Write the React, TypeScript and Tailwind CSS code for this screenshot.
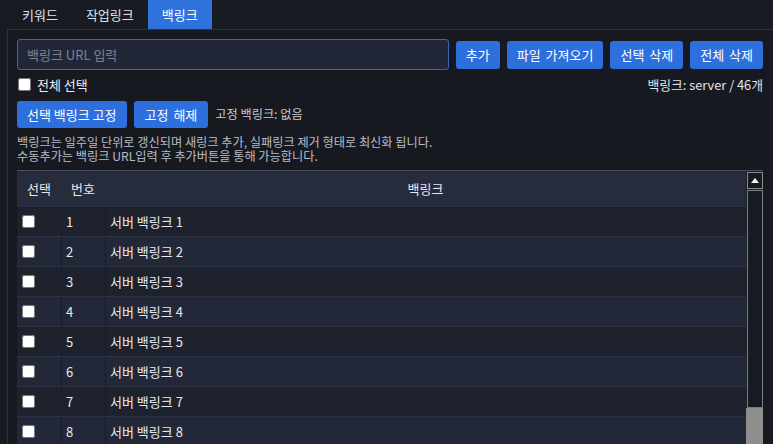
import React from "react"

const font = { fontFamily: '"Noto Sans CJK KR", "Noto Sans", sans-serif' }

const tabs = ["키워드", "작업링크", "백링크"]
const rows = Array.from({ length: 8 }, (_, i) => i + 1)

function Btn({ children, className = "" }: { children: React.ReactNode; className?: string }) {
  return (
    <button
      className={`bg-[#2d6fdc] text-white text-[13px] rounded-[3px] px-[10px] leading-none whitespace-nowrap ${className}`}
    >
      {children}
    </button>
  )
}

function FakeScrollbar() {
  return (
    <div className="w-[17px] flex flex-col items-center bg-[#1b1f28] pt-[1px]">
      <div className="w-[16px] h-[17px] border border-[#8a8a8a] bg-[#161a22] flex items-center justify-center">
        <svg width="8" height="5" viewBox="0 0 8 5">
          <path d="M0 5 L4 0 L8 5 Z" fill="#f2f2f2" />
        </svg>
      </div>
      <div className="w-[16px] h-[218px] mt-[1px] border border-[#7c7c7c] bg-[#161a22]" />
      <div className="w-[17px] flex-1 bg-[#8e8e8e]" />
    </div>
  )
}

export default function App() {
  return (
    <div className="w-[773px] h-[444px] overflow-hidden bg-[#181b22] text-[#e6e8ec]" style={font}>
      {/* tab bar */}
      <div className="flex h-[29px] pl-[8px]">
        {tabs.map((t) => (
          <div
            key={t}
            className={`h-full flex items-center text-[13px] px-[14px] ${
              t === "백링크" ? "bg-[#2f72dc] text-white" : "text-[#dfe2e8]"
            }`}
          >
            {t}
          </div>
        ))}
      </div>

      {/* panel */}
      <div className="ml-[7px] w-[766px] h-[415px] border-t border-l border-[#2c313c] bg-[#161920] pl-[9px] pt-[9px] pr-[10px] flex flex-col">
        <div className="flex gap-[7px] h-[31px] items-center">
          <div className="flex-1 h-[31px] rounded-[3px] border border-[#3d64b3] bg-[#222738] flex items-center px-[9px] text-[13px] text-[#7d8290]">
            백링크 URL 입력
          </div>
          <Btn className="h-[28px]">추가</Btn>
          <Btn className="h-[28px] [word-spacing:2px]">파일 가져오기</Btn>
          <Btn className="h-[28px] [word-spacing:2px]">선택 삭제</Btn>
          <Btn className="h-[28px] [word-spacing:2px]">전체 삭제</Btn>
        </div>

        <div className="flex items-center justify-between mt-[7px] h-[15px]">
          <label className="flex items-center gap-[6px] text-[13px] text-[#eceef2]">
            <input type="checkbox" className="w-[13px] h-[13px] m-0 ml-[1px]" />
            전체 선택
          </label>
          <div className="text-[12.8px] text-[#e3e5ea]">백링크: server / 46개</div>
        </div>

        <div className="flex items-center gap-[7px] mt-[9px] h-[27px]">
          <Btn className="h-[27px]">선택 백링크 고정</Btn>
          <Btn className="h-[27px] px-[11px] [word-spacing:2px]">고정 해제</Btn>
          <span className="text-[12.2px] text-[#c8cbd2]">고정 백링크: 없음</span>
        </div>

        <div className="mt-[7px] text-[12.2px] leading-[14px] text-[#b9bdc6]">
          <div>백링크는 일주일 단위로 갱신되며 새링크 추가, 실패링크 제거 형태로 최신화 됩니다.</div>
          <div>수동추가는 백링크 URL입력 후 추가버튼을 통해 가능합니다.</div>
        </div>

        {/* table */}
        <div className="mt-[7px] flex flex-1 border-t border-[#4a505d] overflow-hidden">
          <div className="flex-1 flex flex-col">
            <div className="h-[35px] shrink-0 bg-[#262c3c] flex items-center text-[13px] text-[#e6e8ee]">
              <div className="w-[44px] text-center">선택</div>
              <div className="w-[44px] text-center">번호</div>
              <div className="flex-1 text-center">백링크</div>
            </div>
            {rows.map((n) => (
              <div
                key={n}
                className={`h-[30px] flex shrink-0 border-t border-[#2b3142] text-[13px] text-[#e6e8ee] ${
                  n % 2 === 1 ? "bg-[#1e222c]" : "bg-[#222837]"
                }`}
              >
                <div className="w-[44px] flex items-center pl-[5px]">
                  <input type="checkbox" className="w-[13px] h-[13px] m-0" />
                </div>
                <div className="w-[44px] flex items-center pl-[4px] border-l border-[#191c24]">{n}</div>
                <div className="flex-1 flex items-center pl-[4px] border-l border-[#191c24]">서버 백링크 {n}</div>
              </div>
            ))}
          </div>
          <FakeScrollbar />
        </div>
      </div>
    </div>
  )
}
